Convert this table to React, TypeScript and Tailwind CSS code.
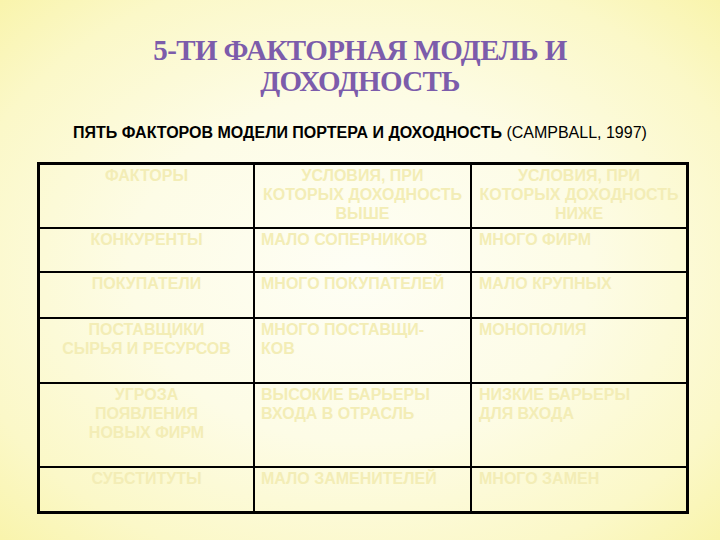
import React from "react";

type Row = { h: string; a: string[]; b: string[]; c: string[] };

const rows: Row[] = [
  {
    h: "h-[64px]",
    a: ["ФАКТОРЫ"],
    b: ["УСЛОВИЯ, ПРИ", "КОТОРЫХ ДОХОДНОСТЬ", "ВЫШЕ"],
    c: ["УСЛОВИЯ, ПРИ", "КОТОРЫХ ДОХОДНОСТЬ", "НИЖЕ"],
  },
  { h: "h-[44px]", a: ["КОНКУРЕНТЫ"], b: ["МАЛО СОПЕРНИКОВ"], c: ["МНОГО ФИРМ"] },
  { h: "h-[46px]", a: ["ПОКУПАТЕЛИ"], b: ["МНОГО ПОКУПАТЕЛЕЙ"], c: ["МАЛО КРУПНЫХ"] },
  {
    h: "h-[65px]",
    a: ["ПОСТАВЩИКИ", "СЫРЬЯ И РЕСУРСОВ"],
    b: ["МНОГО ПОСТАВЩИ-", "КОВ"],
    c: ["МОНОПОЛИЯ"],
  },
  {
    h: "h-[84px]",
    a: ["УГРОЗА", "ПОЯВЛЕНИЯ", "НОВЫХ ФИРМ"],
    b: ["ВЫСОКИЕ БАРЬЕРЫ", "ВХОДА В ОТРАСЛЬ"],
    c: ["НИЗКИЕ БАРЬЕРЫ", "ДЛЯ ВХОДА"],
  },
  { h: "h-[43px]", a: ["СУБСТИТУТЫ"], b: ["МАЛО ЗАМЕНИТЕЛЕЙ"], c: ["МНОГО ЗАМЕН"] },
];

function Lines({ lines }: { lines: string[] }) {
  return (
    <>
      {lines.map((l, i) => (
        <div key={i}>{l}</div>
      ))}
    </>
  );
}

export default function App() {
  return (
    <div className="w-[720px] h-[540px] overflow-hidden bg-[radial-gradient(ellipse_at_center,#fefef5_0%,#fdfce6_45%,#fbf8c8_80%,#f9f4ac_100%)]">
      <div
        className="pt-[35px] text-center text-[29px] leading-[31px] font-bold text-[#7c5cab] tracking-[-0.6px]"
        style={{ fontFamily: '"Liberation Serif", "DejaVu Serif", serif' }}
      >
        <div>5-ТИ ФАКТОРНАЯ МОДЕЛЬ И</div>
        <div>ДОХОДНОСТЬ</div>
      </div>
      <div
        className="mt-[26px] text-center text-[16px] leading-[20px] text-black"
        style={{ fontFamily: '"Liberation Sans", Arial, sans-serif' }}
      >
        <span className="font-bold">ПЯТЬ ФАКТОРОВ МОДЕЛИ ПОРТЕРА И ДОХОДНОСТЬ</span> (CAMPBALL, 1997)
      </div>
      <div
        className="mt-[19px] ml-[37px] w-[652px] h-[352px] border-[3px] border-black flex flex-col text-[16px] leading-[19px] font-bold text-[#f3edb6]"
        style={{ fontFamily: '"Liberation Sans", Arial, sans-serif' }}
      >
        {rows.map((r, i) => (
          <div
            key={i}
            className={`grid grid-cols-[215px_217px_1fr] ${r.h} ${i < rows.length - 1 ? "border-b-2 border-black" : ""}`}
          >
            <div className="border-r-2 border-black px-2 pt-px text-center">
              <Lines lines={r.a} />
            </div>
            <div className={`border-r-2 border-black px-[6px] pt-px ${i === 0 ? "text-center" : "text-left"}`}>
              <Lines lines={r.b} />
            </div>
            <div className={`px-[7px] pt-px ${i === 0 ? "text-center" : "text-left"}`}>
              <Lines lines={r.c} />
            </div>
          </div>
        ))}
      </div>
    </div>
  );
}
